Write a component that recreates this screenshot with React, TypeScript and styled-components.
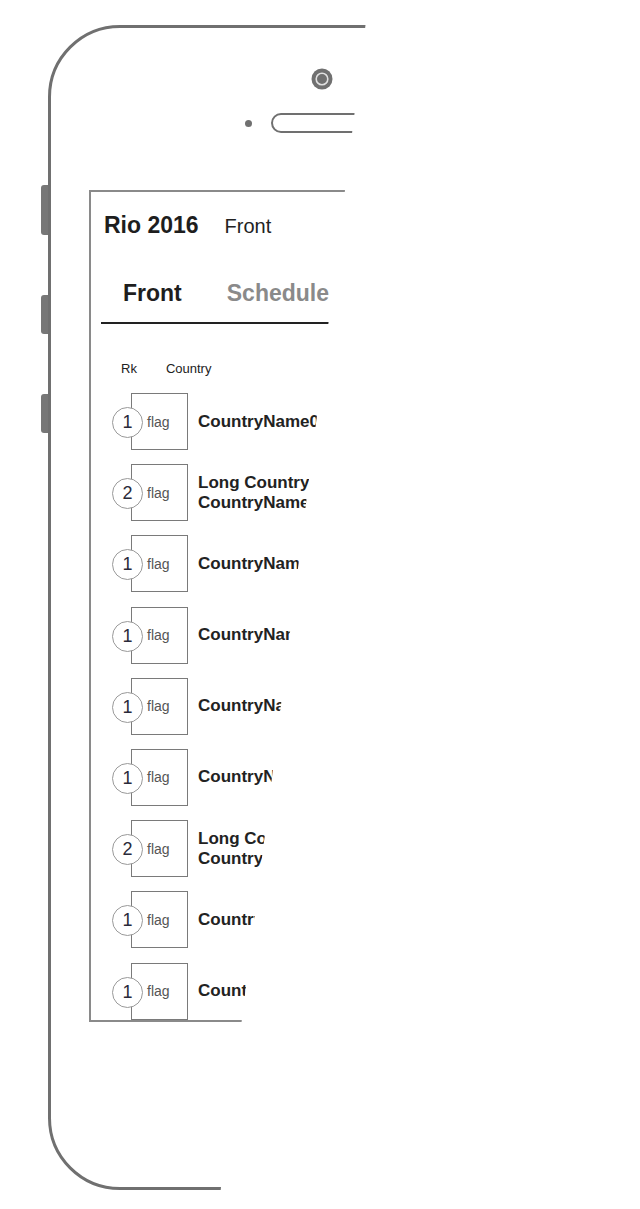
import React from "react";
import styled, { createGlobalStyle } from "styled-components";

const Global = createGlobalStyle`
  html, body { margin: 0; padding: 0; background: #ffffff; }
  body { font-family: "Liberation Sans", Arial, sans-serif; color: #222; }
`;

const Stage = styled.div`
  position: relative;
  width: 640px;
  height: 1209px;
  overflow: hidden;
  background: #fff;
  clip-path: polygon(0 0, 368.6px 0, 218.3px 1209px, 0 1209px);
  padding: 25px 0 0 48px;
  box-sizing: border-box;
`;

const Phone = styled.div`
  position: relative;
  width: 600px;
  height: 1165px;
  box-sizing: border-box;
  border: 3px solid #707070;
  border-radius: 72px;
  display: flex;
  flex-direction: column;
`;

const SideButton = styled.div<{ $top: number; $h: number }>`
  position: absolute;
  left: -10px;
  top: ${(p) => p.$top}px;
  width: 7px;
  height: ${(p) => p.$h}px;
  background: #777;
  border-radius: 3px 0 0 3px;
`;

const Earpiece = styled.div`
  height: 162px;
  box-sizing: border-box;
  padding: 40px 0 0 260px;
  display: flex;
  flex-direction: column;
`;

const CameraRow = styled.div`
  height: 22px;
  display: flex;
`;

const SpeakerRow = styled.div`
  margin-top: 23px;
  margin-left: -66px;
  display: flex;
  align-items: center;
  gap: 19px;
`;

const Dot = styled.div`
  width: 7px;
  height: 7px;
  border-radius: 50%;
  background: #707070;
`;

const Slot = styled.div`
  width: 200px;
  height: 20px;
  box-sizing: border-box;
  border: 2px solid #707070;
  border-radius: 10px;
`;

const Screen = styled.div`
  margin-left: 38px;
  width: 420px;
  height: 832px;
  box-sizing: border-box;
  border: 2px solid #8a8a8a;
  display: flex;
  flex-direction: column;
  overflow: hidden;
`;

const Header = styled.div`
  display: flex;
  align-items: baseline;
  gap: 26px;
  padding: 22px 0 0 13px;
`;

const AppTitle = styled.span`
  font-size: 23px;
  font-weight: 700;
  line-height: 1;
  color: #1e1e1e;
`;

const PageTitle = styled.span`
  font-size: 20px;
  line-height: 1;
  color: #222;
`;

const Tabs = styled.div`
  margin: 45px 0 0 10px;
  width: 260px;
  display: flex;
  gap: 45px;
  padding: 0 0 17px 22px;
  border-bottom: 2px solid #222;
`;

const Tab = styled.span<{ $active?: boolean }>`
  font-size: 23px;
  font-weight: 700;
  line-height: 1;
  color: ${(p) => (p.$active ? "#1e1e1e" : "#8a8a8a")};
`;

const ColumnHead = styled.div`
  display: flex;
  gap: 29px;
  padding: 38px 0 0 30px;
  font-size: 13px;
  line-height: 1;
  color: #222;
`;

const List = styled.div`
  display: flex;
  flex-direction: column;
  gap: 14.2px;
  padding: 18px 0 0 21px;
`;

const Row = styled.div`
  display: flex;
  align-items: center;
  height: 57px;
`;

const Rank = styled.div`
  position: relative;
  z-index: 1;
  width: 31px;
  height: 31px;
  box-sizing: border-box;
  border: 1.5px solid #999;
  border-radius: 50%;
  background: #fff;
  display: flex;
  align-items: center;
  justify-content: center;
  font-size: 18px;
  color: #2a2a3a;
  margin-top: 2px;
`;

const Flag = styled.div`
  width: 57px;
  height: 57px;
  box-sizing: border-box;
  margin-left: -12px;
  border: 1.5px solid #7a7a7a;
  display: flex;
  align-items: center;
  padding-left: 15px;
  font-size: 14px;
  color: #555;
`;

const Name = styled.div`
  margin-left: 10px;
  font-size: 17px;
  font-weight: 700;
  line-height: 20px;
  color: #222;
  white-space: nowrap;
`;

function Camera() {
  return (
    <svg width="22" height="22" viewBox="0 0 22 22">
      <circle cx="11" cy="11" r="10.5" fill="#707070" />
      <circle cx="11" cy="11" r="5.8" fill="#707070" stroke="#e0e0e0" strokeWidth="1.6" />
    </svg>
  );
}

const rows: { rank: number; lines: string[] }[] = [
  { rank: 1, lines: ["CountryName01"] },
  { rank: 2, lines: ["Long CountryName", "CountryName02"] },
  { rank: 1, lines: ["CountryName03"] },
  { rank: 1, lines: ["CountryName04"] },
  { rank: 1, lines: ["CountryName05"] },
  { rank: 1, lines: ["CountryName06"] },
  { rank: 2, lines: ["Long CountryName", "CountryName07"] },
  { rank: 1, lines: ["CountryName08"] },
  { rank: 1, lines: ["CountryName09"] },
];

export default function App() {
  return (
    <>
      <Global />
      <Stage>
        <Phone>
          <SideButton $top={157} $h={50} />
          <SideButton $top={267} $h={39} />
          <SideButton $top={366} $h={39} />
          <Earpiece>
            <CameraRow>
              <Camera />
            </CameraRow>
            <SpeakerRow>
              <Dot />
              <Slot />
            </SpeakerRow>
          </Earpiece>
          <Screen>
            <Header>
              <AppTitle>Rio 2016</AppTitle>
              <PageTitle>Front</PageTitle>
            </Header>
            <Tabs>
              <Tab $active>Front</Tab>
              <Tab>Schedule</Tab>
            </Tabs>
            <ColumnHead>
              <span>Rk</span>
              <span>Country</span>
            </ColumnHead>
            <List>
              {rows.map((r, i) => (
                <Row key={i}>
                  <Rank>{r.rank}</Rank>
                  <Flag>flag</Flag>
                  <Name>
                    {r.lines.map((l, j) => (
                      <div key={j}>{l}</div>
                    ))}
                  </Name>
                </Row>
              ))}
            </List>
          </Screen>
        </Phone>
      </Stage>
    </>
  );
}
